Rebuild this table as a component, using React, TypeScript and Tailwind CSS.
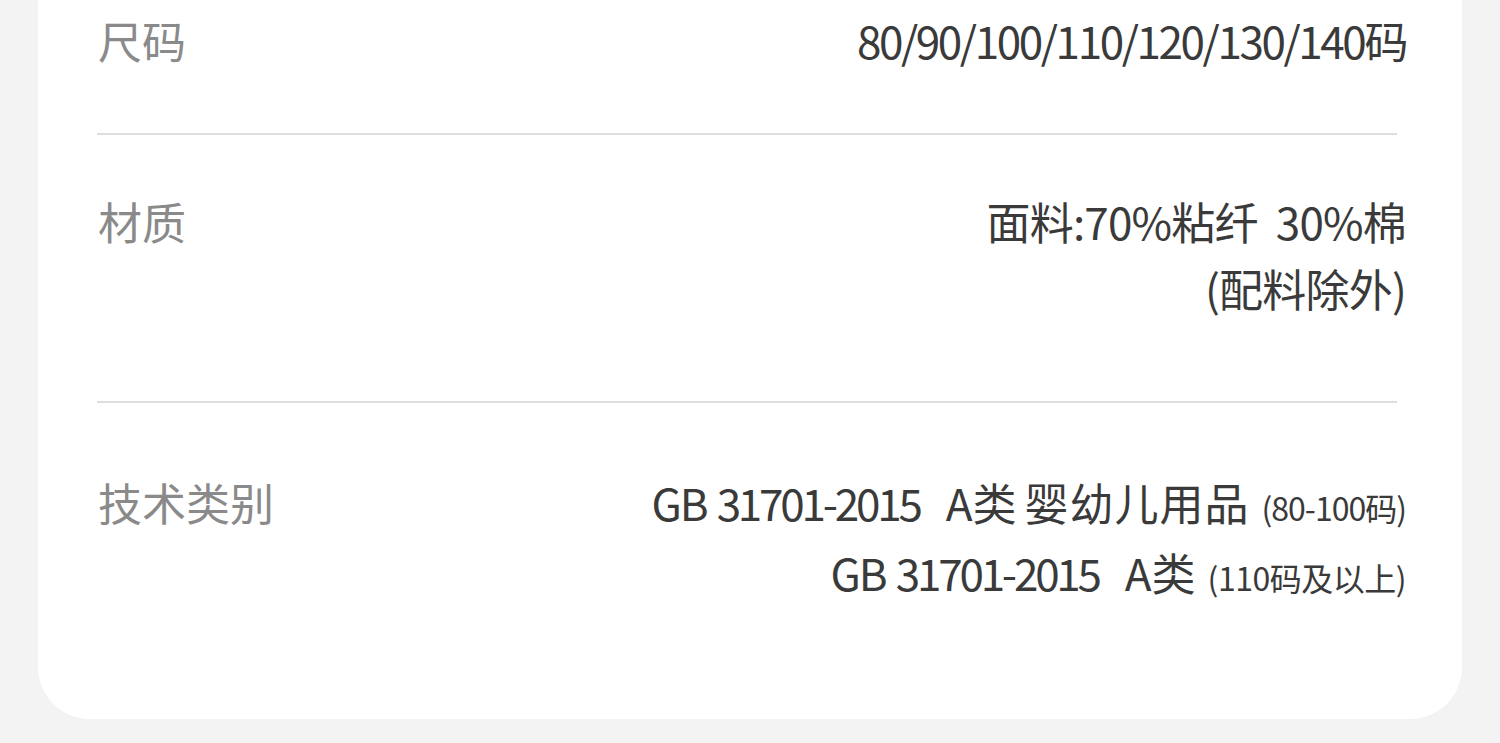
const font = { fontFamily: '"Noto Sans CJK SC", "Noto Sans", sans-serif' };

const Divider = () => <div className="ml-[59px] mr-[65px] h-[2px] bg-[#dedede]" />;

const Gb = () => (
  <>
    <span className="tracking-[-2px]">GB</span>
    <span className="ml-[10px] tracking-[-3.2px]">31701-2015</span>
  </>
);

export default function App() {
  return (
    <div className="h-[743px] w-full overflow-hidden bg-[#f3f3f3]" style={font}>
      <div className="mx-[38px] rounded-b-[52px] bg-white pt-[10px] pb-[112px]">
        {/* 尺码 */}
        <div className="flex justify-between pl-[60px] pr-[56px] text-[44px] leading-[60px]">
          <span className="text-[#8a8a8a]">尺码</span>
          <span className="text-[#3a3a3a] tracking-[-2.4px]">80/90/100/110/120/130/140码</span>
        </div>
        <div className="mt-[63px]"><Divider /></div>

        {/* 材质 */}
        <div className="mt-[53px] flex justify-between pl-[60px] pr-[56px] text-[44px] leading-[67px]">
          <span className="text-[#8a8a8a]">材质</span>
          <div className="flex flex-col items-end text-[#3a3a3a]">
            <span className="tracking-[-0.8px]">面料:70%粘纤&nbsp;&nbsp;30%棉</span>
            <span className="tracking-[-0.8px]">(配料除外)</span>
          </div>
        </div>
        <div className="mt-[79px]"><Divider /></div>

        {/* 技术类别 */}
        <div className="mt-[66px] flex justify-between pl-[60px] pr-[56px] text-[44px] leading-[70px]">
          <span className="-mt-[2px] text-[#8a8a8a]">技术类别</span>
          <div className="-mt-[2px] flex flex-col items-end text-[#3a3a3a]">
            <div className="flex h-[70px] items-baseline">
              <Gb />
              <span className="ml-[26px]">A类</span>
              <span className="ml-[8px] tracking-[1px]">婴幼儿用品</span>
              <span className="ml-[12px] text-[32px] leading-none tracking-[-1px]">(80-100码)</span>
            </div>
            <div className="flex h-[70px] items-baseline">
              <Gb />
              <span className="ml-[26px]">A类</span>
              <span className="ml-[12px] text-[32px] leading-none tracking-[-0.5px]">(110码及以上)</span>
            </div>
          </div>
        </div>
      </div>
    </div>
  );
}
